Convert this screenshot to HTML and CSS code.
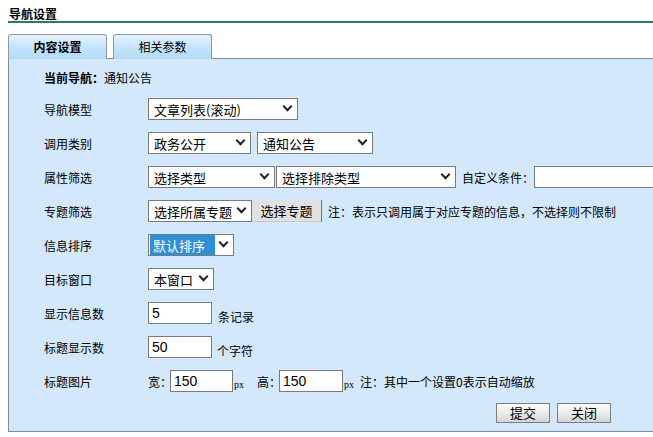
FILE: index.html
```html
<!DOCTYPE html>
<html lang="zh-CN">
<head>
<meta charset="utf-8">
<title>导航设置</title>
<link rel="stylesheet" href="styles.css">
</head>
<body>
<div class="page">
  <div class="title"><span>导航设置</span></div>
  <div class="tabs">
    <div class="tab active">内容设置</div>
    <div class="tab">相关参数</div>
  </div>
  <div class="panel">
    <div class="row first"><span class="lbl-strong">当前导航：</span><span>通知公告</span></div>

    <div class="row"><span class="lbl">导航模型</span>
      <span class="sel w150"><select><option>文章列表(滚动)</option></select></span>
    </div>

    <div class="row"><span class="lbl">调用类别</span>
      <span class="sel w103"><select><option>政务公开</option></select></span>
      <span class="sel w116 ml6"><select><option>通知公告</option></select></span>
    </div>

    <div class="row"><span class="lbl">属性筛选</span>
      <span class="sel w127"><select><option>选择类型</option></select></span>
      <span class="sel w180 ml1"><select><option>选择排除类型</option></select></span>
      <span class="txt ml6">自定义条件：</span>
      <input class="inp wide" type="text" value="">
    </div>

    <div class="row"><span class="lbl">专题筛选</span>
      <span class="sel w104"><select><option>选择所属专题</option></select></span>
      <button class="btn-gray" type="button">选择专题</button>
      <span class="txt ml6">注：表示只调用属于对应专题的信息，不选择则不限制</span>
    </div>

    <div class="row"><span class="lbl">信息排序</span>
      <span class="sel w86"><select class="hl"><option>默认排序</option></select></span>
    </div>

    <div class="row"><span class="lbl">目标窗口</span>
      <span class="sel w66"><select><option>本窗口</option></select></span>
    </div>

    <div class="row"><span class="lbl">显示信息数</span>
      <input class="inp w64" type="text" value="5">
      <span class="txt ml6 low">条记录</span>
    </div>

    <div class="row"><span class="lbl">标题显示数</span>
      <input class="inp w64" type="text" value="50">
      <span class="txt ml5 low">个字符</span>
    </div>

    <div class="row"><span class="lbl">标题图片</span>
      <span class="txt tight">宽：</span>
      <input class="inp w63" type="text" value="150">
      <span class="px">px</span>
      <span class="txt tight ml13">高：</span>
      <input class="inp w64" type="text" value="150">
      <span class="px">px</span>
      <span class="txt ml6">注：其中一个设置0表示自动缩放</span>
    </div>

    <div class="row actions">
      <button class="btn" type="button">提交</button>
      <button class="btn" type="button">关闭</button>
    </div>
  </div>
</div>
</body>
</html>
```

FILE: styles.css
```css
html, body {
  margin: 0;
  padding: 0;
  background: #ffffff;
  overflow: hidden;
}
body {
  font-family: "Noto Sans CJK SC", "Liberation Sans", sans-serif;
  font-size: 12px;
  color: #000;
}
.page {
  margin-left: 8px;
  width: 680px;
}
.title {
  margin-top: 7px;
  height: 14px;
  line-height: 14px;
  border-bottom: 2px solid #2f7b62;
  padding-left: 1px;
  font-weight: bold;
  font-size: 12px;
}
.tabs {
  display: flex;
  gap: 6px;
  margin-top: 11px;
  height: 24px;
}
.tab {
  width: 97px;
  height: 24px;
  line-height: 24px;
  text-align: center;
  border: 1px solid #8c98a4;
  border-bottom: none;
  border-radius: 3px 3px 0 0;
  background: linear-gradient(#e4f2fe, #c4e3fa 55%, #b2daf7);
  font-size: 12px;
}
.tab.active {
  font-weight: bold;
}
.panel {
  border: 1px solid #858b90;
  background: #d3e8fb;
  padding: 0 0 3px 35px;
  height: 369px;
  box-sizing: content-box;
}
.row {
  display: flex;
  align-items: center;
  height: 34px;
  white-space: nowrap;
}
.row.first {
  height: 33px;
  padding-top: 4px;
  box-sizing: border-box;
  align-items: center;
}
.lbl-strong {
  font-weight: bold;
}
.lbl {
  width: 104px;
  flex: none;
}
.sel {
  position: relative;
  display: inline-block;
  height: 22px;
  flex: none;
}
.sel select {
  appearance: none;
  -webkit-appearance: none;
  width: 100%;
  height: 22px;
  margin: 0;
  border: 1px solid #7a7a7a;
  border-radius: 0;
  background: #fff;
  padding: 0 0 0 5px;
  font-family: "Noto Sans CJK SC", "Liberation Sans", sans-serif;
  font-size: 13px;
  color: #000;
  outline: none;
}
.sel::after {
  content: "";
  position: absolute;
  right: 7px;
  top: 5px;
  width: 5px;
  height: 5px;
  border-right: 2px solid #222;
  border-bottom: 2px solid #222;
  transform: rotate(45deg);
  pointer-events: none;
}
.sel select.hl {
  color: #fff;
  background: linear-gradient(to right, #fff 1px, #2f8fd6 1px, #2f8fd6 66px, #fff 66px);
  padding-left: 4px;
}
.w150 { width: 150px; }
.w103 { width: 103px; }
.w116 { width: 116px; }
.w127 { width: 127px; }
.w180 { width: 180px; }
.w104 { width: 104px; }
.w86 { width: 86px; }
.w66 { width: 66px; }
.w64 { width: 64px; }
.w63 { width: 63px; }
.ml1 { margin-left: 1px; }
.ml5 { margin-left: 5px; }
.ml6 { margin-left: 6px; }
.ml13 { margin-left: 13px; }
.txt {
  font-size: 12px;
}
.tight {
  margin-right: -2px;
}
.low {
  position: relative;
  top: 3px;
}
.inp {
  box-sizing: border-box;
  height: 22px;
  margin: 0;
  border: 1px solid #7a7a7a;
  border-radius: 0;
  background: #fff;
  padding: 0 0 0 3px;
  font-family: "Liberation Sans", Arial, sans-serif;
  font-size: 14px;
  color: #000;
  outline: none;
  flex: none;
}
.inp.wide {
  width: 140px;
}
.px {
  font-family: "Liberation Serif", serif;
  font-size: 10px;
  align-self: flex-end;
  margin-bottom: 8px;
  margin-left: 1px;
}
.btn-gray {
  height: 22px;
  width: 70px;
  margin: 0;
  padding: 0;
  border: none;
  border-right: 1px solid #6f6f6f;
  border-bottom: 1px solid #c8c8c8;
  background: #e1e1e1;
  font-family: "Noto Sans CJK SC", "Liberation Sans", sans-serif;
  font-size: 13px;
  color: #000;
  flex: none;
}
.actions {
  height: 30px;
  padding-left: 452px;
  gap: 7px;
}
.btn {
  width: 54px;
  height: 20px;
  margin: 0;
  padding: 0;
  border: 1px solid #7d7d7d;
  border-radius: 0;
  background: linear-gradient(#fbfbfb, #ececec 50%, #d4d4d4);
  font-family: "Noto Sans CJK SC", "Liberation Sans", sans-serif;
  font-size: 13px;
  line-height: 18px;
  color: #000;
  flex: none;
}
```
